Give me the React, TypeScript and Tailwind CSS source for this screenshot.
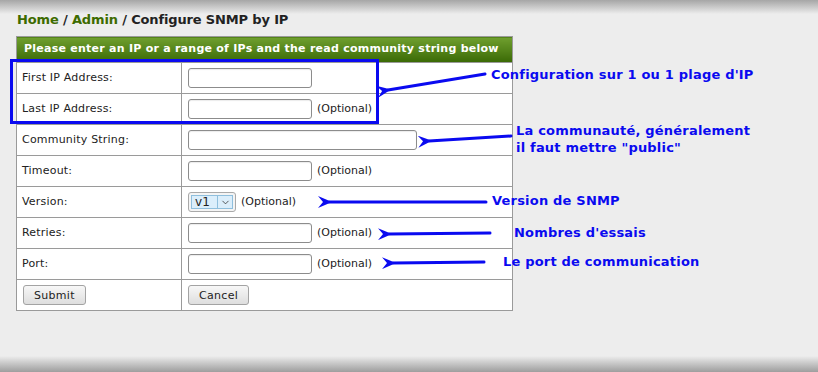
import { ChevronDown } from 'lucide-react';

type Row = {
  label: string;
  field: 'input' | 'wide' | 'select';
  optional?: boolean;
};

const rows: Row[] = [
  { label: 'First IP Address:', field: 'input' },
  { label: 'Last IP Address:', field: 'input', optional: true },
  { label: 'Community String:', field: 'wide' },
  { label: 'Timeout:', field: 'input', optional: true },
  { label: 'Version:', field: 'select', optional: true },
  { label: 'Retries:', field: 'input', optional: true },
  { label: 'Port:', field: 'input', optional: true },
];

const Field = ({ row }: { row: Row }) => {
  if (row.field === 'select') {
    return (
      <div className="flex h-[20px] w-[48px] items-center rounded-[3px] border border-[#a9a9a9] bg-[#f4f4f4] p-[2px]">
        <div className="flex h-full flex-1 items-center border border-[#8fbfdd] bg-[#dbeefb]">
          <span className="w-[25px] pl-[3px] text-[12px] leading-none text-[#222]">v1</span>
          <span className="flex h-full flex-1 items-center justify-center border-l border-[#8fbfdd]">
            <ChevronDown size={11} strokeWidth={1.75} className="text-[#333]" />
          </span>
        </div>
      </div>
    );
  }
  return (
    <div
      className={`h-[20px] rounded-[3px] border border-[#8c8c8c] bg-white shadow-[inset_0_1px_1px_rgba(0,0,0,0.08)] ${
        row.field === 'wide' ? 'w-[229px]' : 'w-[124px]'
      }`}
    />
  );
};

const Btn = ({ children }: { children: string }) => (
  <button
    type="button"
    className="h-[20px] rounded-[3px] border border-[#a3a3a3] bg-gradient-to-b from-[#f7f7f7] to-[#dedede] px-[10px] text-[11px] leading-none text-[#222] tracking-[0.3px]"
  >
    {children}
  </button>
);

const Note = ({ className, children }: { className: string; children: React.ReactNode }) => (
  <div className={`absolute whitespace-nowrap text-[13px] font-bold leading-[17px] tracking-[0.2px] text-[#0a0af0] ${className}`}>
    {children}
  </div>
);

export default function App() {
  return (
    <div
      className="relative h-[372px] w-[818px] overflow-hidden bg-[#ededed] text-[#222]"
      style={{ fontFamily: '"DejaVu Sans", Verdana, sans-serif' }}
    >
      {/* torn edges */}
      <div className="absolute inset-x-0 top-0 h-[14px] bg-gradient-to-b from-[#a6a6a6] to-[#ededed]" />
      <div className="absolute inset-x-0 bottom-0 h-[16px] bg-gradient-to-t from-[#9e9e9e] to-[#ededed]" />

      <div className="relative px-[16px] pt-[11px]">
        <h1 className="pl-[1px] text-[13px] font-bold leading-[18px] tracking-[-0.15px]">
          <span className="text-[#3d6b00]">Home</span> / <span className="text-[#3d6b00]">Admin</span> / Configure SNMP by IP
        </h1>

        <table className="mt-[7px] w-[497px] table-fixed border-collapse border border-[#9a9a9a] bg-white text-[11px] tracking-[0.2px]">
          <colgroup>
            <col className="w-[165px]" />
            <col />
          </colgroup>
          <thead>
            <tr>
              <th
                colSpan={2}
                className="h-[26px] whitespace-nowrap bg-gradient-to-b from-[#6f9f2e] via-[#55851a] to-[#3a6904] px-[7px] text-left text-[11px] font-bold tracking-[0.25px] text-white"
              >
                Please enter an IP or a range of IPs and the read community string below
              </th>
            </tr>
          </thead>
          <tbody>
            {rows.map((row) => (
              <tr key={row.label} className="h-[31px]">
                <td className="border border-[#9a9a9a] pl-[5px]">{row.label}</td>
                <td className="border border-[#9a9a9a] pl-[6px]">
                  <div className="flex items-center gap-[5px]">
                    <Field row={row} />
                    {row.optional && <span className="tracking-normal">(Optional)</span>}
                  </div>
                </td>
              </tr>
            ))}
            <tr className="h-[31px]">
              <td className="border border-[#9a9a9a] pl-[6px]">
                <Btn>Submit</Btn>
              </td>
              <td className="border border-[#9a9a9a] pl-[6px]">
                <Btn>Cancel</Btn>
              </td>
            </tr>
          </tbody>
        </table>
      </div>

      {/* annotations */}
      <div className="absolute left-[10px] top-[59px] h-[65px] w-[369px] border-[3px] border-[#0a0af0]" />

      <svg className="absolute inset-0" width="818" height="372">
        <defs>
          <marker
            id="ah"
            viewBox="0 0 14 12"
            refX="3"
            refY="6"
            markerWidth="14"
            markerHeight="12"
            markerUnits="userSpaceOnUse"
            orient="auto"
          >
            <path d="M14 0 L0 6 L14 12 L9 6 Z" fill="#0a0af0" />
          </marker>
        </defs>
        <g stroke="#0a0af0" strokeWidth="3" fill="none" strokeLinecap="round">
          <line x1="485" y1="74" x2="388" y2="90" markerEnd="url(#ah)" />
          <line x1="511" y1="136" x2="429" y2="141" markerEnd="url(#ah)" />
          <line x1="486" y1="202" x2="329" y2="202" markerEnd="url(#ah)" />
          <line x1="490" y1="233" x2="389" y2="234" markerEnd="url(#ah)" />
          <line x1="484" y1="262" x2="393" y2="263" markerEnd="url(#ah)" />
        </g>
      </svg>

      <Note className="left-[491px] top-[66px]">Configuration sur 1 ou 1 plage d'IP</Note>
      <Note className="left-[516px] top-[122px]">
        La communauté, généralement
        <br />
        il faut mettre "public"
      </Note>
      <Note className="left-[492px] top-[192px]">Version de SNMP</Note>
      <Note className="left-[514px] top-[224px]">Nombres d'essais</Note>
      <Note className="left-[503px] top-[253px]">Le port de communication</Note>
    </div>
  );
}
